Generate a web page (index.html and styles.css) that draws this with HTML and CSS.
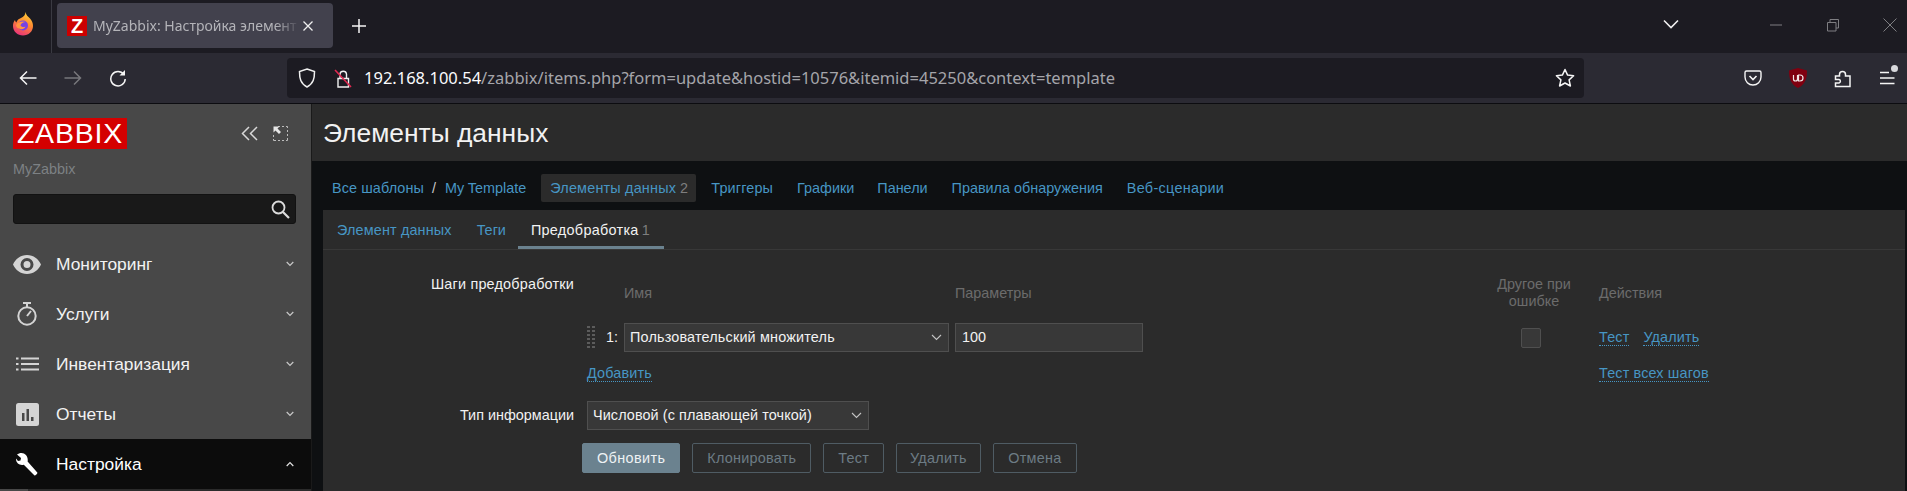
FILE: index.html
```html
<!DOCTYPE html>
<html lang="ru">
<head>
<meta charset="utf-8">
<title>MyZabbix</title>
<link rel="stylesheet" href="styles.css">
</head>
<body>
<div class="tabstrip">
  <div class="ff-slot">
    <svg class="ff" width="24" height="24" viewBox="0 0 24 24"><defs><linearGradient id="ffg" x1="0.7" y1="0" x2="0.3" y2="1"><stop offset="0" stop-color="#ffd43a"/><stop offset="0.45" stop-color="#ff8a30"/><stop offset="1" stop-color="#e8307c"/></linearGradient></defs><path fill="url(#ffg)" d="M14.500 0c.5 3 2.500 4.500 4.500 6.500 2 2.300 3 4.500 3 7.500 0 5.500-4.500 9.500-10 9.500S2 19.500 2 14c0-2.500.7-4.500 2-6 .2 1.300.7 2 1.400 2.600C6 8 8 6.800 10 6c2.500-1 4.500-3 4.500-6z"/><circle cx="12" cy="13.500" r="5" fill="#7542e5"/><path fill="#ff9640" d="M5 13c2-3 6-4.500 10-3-3 0-5 1.500-5.500 3.500 1 1.500 3 2 5 1-1 2.500-4 3.500-6.500 2C6 16 5 14.500 5 13z"/></svg>
  </div>
  <div class="tab">
    <span class="favicon">Z</span>
    <span class="tab-title">MyZabbix: Настройка элемент</span>
    <svg class="tab-close" width="14" height="14" viewBox="0 0 14 14"><path d="M2.500 2.500l9 9M11.500 2.500l-9 9" stroke="#f0f0f0" stroke-width="1.300" fill="none"/></svg>
  </div>
  <svg class="newtab" width="18" height="18" viewBox="0 0 18 18"><path d="M9 2v14M2 9h14" stroke="#f5f5f5" stroke-width="1.500" fill="none"/></svg>
  <svg class="alltabs" width="18" height="12" viewBox="0 0 18 12"><path d="M2 2.500l7 7 7-7" stroke="#f0f0f0" stroke-width="1.600" fill="none"/></svg>
  <div class="winctl">
    <svg width="14" height="14" viewBox="0 0 14 14"><path d="M1 7h12" stroke="#7e7e82" stroke-width="1" fill="none"/></svg>
    <svg width="14" height="14" viewBox="0 0 14 14"><path d="M1.500 4.500h8.500V13H1.500zM4 4.500v-3h8.500V10H10" stroke="#7e7e82" stroke-width="1" fill="none"/></svg>
    <svg width="14" height="14" viewBox="0 0 14 14"><path d="M.5.500l13 13M13.500.500l-13 13" stroke="#7e7e82" stroke-width="1" fill="none"/></svg>
  </div>
</div>
<div class="toolbar">
  <svg class="tb-ic back" width="18" height="16" viewBox="0 0 18 16"><path d="M8 1.500L1.500 8 8 14.500M1.500 8H17.500" stroke="#f5f5f5" stroke-width="1.500" fill="none"/></svg>
  <svg class="tb-ic fwd" width="18" height="16" viewBox="0 0 18 16"><path d="M10 1.500L16.500 8 10 14.500M16.500 8H.5" stroke="#77777c" stroke-width="1.500" fill="none"/></svg>
  <svg class="tb-ic reload" width="18" height="18" viewBox="0 0 18 18"><path d="M14.800 5.500A7.200 7.200 0 1 0 16.200 10" stroke="#f5f5f5" stroke-width="1.500" fill="none"/><path d="M16 1v5.500h-5.500z" fill="#f5f5f5"/></svg>
  <div class="urlbar">
    <svg class="shield" width="18" height="20" viewBox="0 0 18 20"><path d="M9 1l7.500 2.500c0 7-1 12-7.500 15.500C2.500 15.500 1.500 10.500 1.500 3.500z" stroke="#f0f0f0" stroke-width="1.500" fill="none"/></svg>
    <svg class="lock" width="18" height="20" viewBox="0 0 18 20"><path d="M4 10.500h10.500V19H4zM6 10.500V6a3.300 3.300 0 0 1 6.500 0v4.500" stroke="#f0f0f0" stroke-width="1.400" fill="none"/><path d="M1 2l16 17" stroke="#e22850" stroke-width="1.600" fill="none"/></svg>
    <span class="url"><span class="url-host">192.168.100.54</span>/zabbix/items.php?form=update&amp;hostid=10576&amp;itemid=45250&amp;context=template</span>
    <svg class="star" width="20" height="20" viewBox="0 0 20 20"><path d="M10 1.500l2.600 5.600 6 .7-4.500 4.100 1.300 6.100L10 15l-5.400 3 1.300-6.100L1.400 7.800l6-.7z" stroke="#f5f5f5" stroke-width="1.500" stroke-linejoin="round" fill="none"/></svg>
  </div>
  <div class="tb-right">
    <svg width="18" height="16" viewBox="0 0 18 16"><path d="M2.500 1h13A1.500 1.500 0 0 1 17 2.500V7a8 8 0 0 1-16 0V2.500A1.500 1.500 0 0 1 2.500 1z" stroke="#f5f5f5" stroke-width="1.400" fill="none"/><path d="M5.500 6L9 9.500 12.500 6" stroke="#f5f5f5" stroke-width="1.600" fill="none"/></svg>
    <svg class="ub" width="18" height="20" viewBox="0 0 18 20"><path d="M9 0l9 2.500c0 8-1.500 13.500-9 17.500C1.500 16 0 10.500 0 2.500z" fill="#800010"/><path d="M4.500 7v4a2 2 0 0 0 4 0V7M9.500 7h1.500a2.500 2.500 0 0 1 0 6H9.500z" stroke="#f0e6e6" stroke-width="1.200" fill="none"/></svg>
    <svg width="18" height="20" viewBox="0 0 18 20"><path d="M1.500 8h4V6.500a3 3 0 1 1 6 0V8h4.500v10.500H1.500V15H5a1.800 1.800 0 0 0 0-3.500H1.500z" stroke="#f5f5f5" stroke-width="1.500" fill="none"/></svg>
    <span class="menu-ic"><svg width="16" height="14" viewBox="0 0 16 14"><path d="M1 1.500h9M1 7h14.500M1 12.500h14.500" stroke="#f5f5f5" stroke-width="1.400" fill="none"/></svg><i class="dot"></i></span>
  </div>
</div>
<div class="app">
  <aside class="sidebar">
    <div class="brand">
      <span class="logo">ZABBIX</span>
      <div class="brand-ctl">
        <svg width="18" height="15" viewBox="0 0 18 15"><path d="M8 1L1.500 7.500 8 14M16 1L9.500 7.500 16 14" stroke="#d8d8d8" stroke-width="1.500" fill="none"/></svg>
        <svg width="15" height="15" viewBox="0 0 15 15"><path d="M5 .5h2M9 .5h2M13 .5h1.500V2M14.500 4v2M14.500 8v2M14.500 12v2.500H13M11 14.500H9M7 14.500H5M3 14.500H.5V13M.5 11V9" stroke="#bdbdbd" stroke-width="1" fill="none"/><path d="M.5.500h6l-2 2 3.500 3.500-2 2L2.500 4.500l-2 2z" fill="#e6e6e6"/></svg>
      </div>
    </div>
    <div class="server">MyZabbix</div>
    <div class="search">
      <svg width="19" height="19" viewBox="0 0 19 19"><circle cx="7.500" cy="7.500" r="6" stroke="#dcdcdc" stroke-width="1.800" fill="none"/><path d="M12 12l6 6" stroke="#dcdcdc" stroke-width="2.200" fill="none"/></svg>
    </div>
    <nav class="menu">
      <div class="mi">
        <span class="mi-ic"><svg width="28" height="19" viewBox="0 0 28 19"><path fill-rule="evenodd" fill="#d4d4d4" d="M14 0c6.500 0 11.500 4 14 9.500C25.500 15 20.500 19 14 19S2.500 15 0 9.500C2.500 4 7.500 0 14 0zm0 3a6.500 6.500 0 1 0 0 13 6.500 6.500 0 0 0 0-13zm0 3a3.500 3.500 0 1 1 0 7 3.500 3.500 0 0 1 0-7z"/></svg></span>
        <span class="mi-text">Мониторинг</span>
        <svg class="chev" width="8" height="6" viewBox="0 0 8 6"><path d="M.7 1L4 4.500 7.300 1" stroke="#c8c8c8" stroke-width="1.200" fill="none"/></svg>
      </div>
      <div class="mi">
        <span class="mi-ic"><svg width="20" height="24" viewBox="0 0 20 24"><circle cx="10" cy="14" r="8.700" stroke="#d4d4d4" stroke-width="2" fill="none"/><path d="M6 1h8" stroke="#d4d4d4" stroke-width="2" fill="none"/><path d="M10 1v4M10 14l4-5" stroke="#d4d4d4" stroke-width="2" fill="none"/></svg></span>
        <span class="mi-text">Услуги</span>
        <svg class="chev" width="8" height="6" viewBox="0 0 8 6"><path d="M.7 1L4 4.500 7.300 1" stroke="#c8c8c8" stroke-width="1.200" fill="none"/></svg>
      </div>
      <div class="mi">
        <span class="mi-ic"><svg width="23" height="14" viewBox="0 0 23 14"><path d="M0 1.500h2.500M0 7h2.500M0 12.500h2.500M5 1.500h18M5 7h18M5 12.500h18" stroke="#d4d4d4" stroke-width="2.200" fill="none"/></svg></span>
        <span class="mi-text">Инвентаризация</span>
        <svg class="chev" width="8" height="6" viewBox="0 0 8 6"><path d="M.7 1L4 4.500 7.300 1" stroke="#c8c8c8" stroke-width="1.200" fill="none"/></svg>
      </div>
      <div class="mi">
        <span class="mi-ic"><svg width="23" height="23" viewBox="0 0 23 23"><rect width="23" height="23" rx="2.500" fill="#d4d4d4"/><path d="M6 10h2.500v8H6zM10.500 6H13v12h-2.500zM15 14h2.500v4H15z" fill="#484848"/></svg></span>
        <span class="mi-text">Отчеты</span>
        <svg class="chev" width="8" height="6" viewBox="0 0 8 6"><path d="M.7 1L4 4.500 7.300 1" stroke="#c8c8c8" stroke-width="1.200" fill="none"/></svg>
      </div>
      <div class="mi mi-active">
        <span class="mi-ic"><svg width="23" height="23" viewBox="0 0 23 23"><path fill="#fff" d="M5.500 0C3.800 0 2.200.6 1 1.500L5 5 4.500 7.500 2 8 0 5.500C-.3 9 2.500 12 6 12c.6 0 1.200-.1 1.800-.3L18.500 22.500c.6.600 3.500-2 2.800-3.100L11.600 8.500C12.500 4 9.500 0 5.500 0z"/></svg></span>
        <span class="mi-text">Настройка</span>
        <svg class="chev" width="8" height="6" viewBox="0 0 8 6"><path d="M.7 5L4 1.500 7.300 5" stroke="#e0e0e0" stroke-width="1.200" fill="none"/></svg>
      </div>
      <div class="submenu"></div>
    </nav>
  </aside>
  <main class="main">
    <header class="page-head"><h1 class="page-title">Элементы данных</h1></header>
    <nav class="crumbs">
      <a class="lnk crumb crumb-all">Все шаблоны</a><span class="sep">/</span><a class="lnk crumb">My Template</a>
      <span class="crumb-sel"><a class="lnk">Элементы данных</a> <span class="count">2</span></span>
      <a class="lnk crumb-tr">Триггеры</a>
      <a class="lnk crumb-gr">Графики</a>
      <a class="lnk crumb-pa">Панели</a>
      <a class="lnk crumb-ru">Правила обнаружения</a>
      <a class="lnk crumb-we">Веб-сценарии</a>
    </nav>
    <section class="card">
      <div class="tabs">
        <a class="lnk tab-a">Элемент данных</a>
        <a class="lnk tab-b">Теги</a>
        <span class="tab-sel">Предобработка <span class="count">1</span></span>
      </div>
      <div class="form">
        <div class="field">
          <div class="label label-steps">Шаги предобработки</div>
          <div class="steps">
            <div class="sh steps-head-spacer"></div>
            <div class="sh sh-mid">Имя</div>
            <div class="sh sh-mid">Параметры</div>
            <div class="sh sh-other">Другое при ошибке</div>
            <div class="sh sh-mid">Действия</div>

            <div class="step-num">
              <svg width="8" height="24" viewBox="0 0 8 24"><path d="M1.500 0v24M6.500 0v24" stroke="#5c5c5c" stroke-width="3" stroke-dasharray="2 2" fill="none"/></svg>
              <span>1:</span>
            </div>
            <div class="select sel-step"><span>Пользовательский множитель</span><svg width="11" height="7" viewBox="0 0 11 7"><path d="M1 1l4.500 4.500L10 1" stroke="#c4c4c4" stroke-width="1.100" fill="none"/></svg></div>
            <div class="input">100</div>
            <div class="chk-cell"><span class="chk"></span></div>
            <div class="act"><a class="dlnk">Тест</a><a class="dlnk">Удалить</a></div>

            <div class="add-cell"><a class="dlnk">Добавить</a></div>
            <div class="act-all"><a class="dlnk">Тест всех шагов</a></div>
          </div>
        </div>
        <div class="field field-type">
          <div class="label">Тип информации</div>
          <div class="select sel-type"><span>Числовой (с плавающей точкой)</span><svg width="11" height="7" viewBox="0 0 11 7"><path d="M1 1l4.500 4.500L10 1" stroke="#c4c4c4" stroke-width="1.100" fill="none"/></svg></div>
        </div>
        <div class="buttons">
          <button class="btn btn-primary">Обновить</button>
          <button class="btn">Клонировать</button>
          <button class="btn">Тест</button>
          <button class="btn btn-del">Удалить</button>
          <button class="btn">Отмена</button>
        </div>
      </div>
    </section>
  </main>
</div>
</body>
</html>
```
FILE: styles.css
```css
* { box-sizing: border-box; }
html, body { margin: 0; height: 491px; overflow: hidden; background: #0e1012; }
body { font: 14.4px/17px "Liberation Sans", Arial, sans-serif; color: #f2f2f2; }
svg { display: block; flex: none; }

/* browser chrome */
.tabstrip { height: 53px; background: #1c1b22; display: flex; align-items: flex-start; }
.ff-slot { width: 52px; height: 53px; border-right: 1px solid #3a3a42; display: flex; align-items: center; padding: 0 0 6px 11px; }
.tab { margin: 3px 0 0 5px; width: 276px; height: 45px; background: #42414d; border-radius: 4px; display: flex; align-items: center; padding-left: 10px; }
.favicon { width: 20px; height: 20px; background: #cc0000; color: #fff; font: bold 20px/20px "Liberation Sans", sans-serif; text-align: center; flex: none; }
.tab-title { margin-left: 6px; width: 207px; white-space: nowrap; font: 14px/20px "Noto Sans", "Open Sans", sans-serif; color: #b4b4b9; -webkit-mask-image: linear-gradient(90deg, #000 88%, transparent 100%); mask-image: linear-gradient(90deg, #000 88%, transparent 100%); }
.tab-close { margin-left: 1px; }
.newtab { margin: 17px 0 0 17px; }
.alltabs { margin: 18px 0 0 1294px; }
.winctl { margin: 18px 0 0 89px; display: flex; gap: 43px; }

.toolbar { height: 50px; background: #2b2a33; display: flex; align-items: center; border-bottom: 0; }
.tb-ic.back { margin-left: 19px; }
.tb-ic.fwd { margin-left: 27px; }
.tb-ic.reload { margin-left: 27px; }
.urlbar { margin-left: 160px; width: 1297px; height: 40px; background: #1c1b22; border-radius: 4px; display: flex; align-items: center; padding: 0 9px 0 11px; }
.lock { margin-left: 18px; }
.url { margin-left: 12px; font: 16.500px/20px "Noto Sans", "Open Sans", sans-serif; color: #a5a5aa; white-space: nowrap; flex: 1; }
.url-host { color: #fbfbfe; }
.tb-right { margin-left: 160px; display: flex; align-items: center; gap: 27px; }
.menu-ic { position: relative; display: block; }
.dot { position: absolute; top: -6px; right: -3px; width: 7px; height: 7px; border-radius: 50%; background: #d8d8dc; }

/* app */
.app { display: flex; height: 388px; border-top: 1px solid #0c0c10; }
.sidebar { width: 311px; background: #484848; flex: none; overflow: hidden; }
.brand { display: flex; align-items: center; justify-content: space-between; padding: 14px 23px 0 13px; }
.logo { display: block; width: 114px; height: 31px; background: #d40000; color: #fff; font: 28.500px/31px "Liberation Sans", sans-serif; letter-spacing: .8px; text-align: center; }
.brand-ctl { display: flex; align-items: center; gap: 14px; }
.server { margin: 12px 0 0 13px; color: #7d8184; }
.search { margin: 16px 15px 0 13px; height: 30px; background: #191919; border: 1px solid #121212; border-radius: 3px; display: flex; align-items: center; justify-content: flex-end; padding-right: 5px; }
.menu { margin-top: 15px; }
.mi { height: 50px; display: flex; align-items: center; padding-left: 13px; font-size: 17.400px; color: #f2f2f2; }
.mi-ic { width: 43px; display: flex; justify-content: center; padding-right: 15px; flex: none; }
.mi-text { flex: 1; }
.chev { margin-right: 17px; }
.mi-active { background: #0c0c0c; color: #fff; }
.submenu { height: 10px; margin-left: 28px; background: #2b2b2b; }

.main { flex: 1; min-width: 0; background: #0e1012; border-left: 1px solid #1a1a1a; }
.page-head { height: 57px; background: #2b2b2b; display: flex; align-items: center; padding-left: 11px; }
.page-title { margin: 0; font-size: 26.400px; line-height: 30px; font-weight: 400; color: #f2f2f2; }
.lnk { color: #4796c4; }
.crumbs { height: 49px; padding: 13px 0 8px 20px; display: flex; align-items: center; white-space: nowrap; }
.crumb-all { letter-spacing: .1px; }
.sep { margin: 0 9px 0 8px; color: #c8c8c8; }
.crumb-sel { margin-left: 15px; height: 28px; padding: 0 8px 0 9px; background: #2b2b2b; border-radius: 2px; display: flex; align-items: center; gap: 4px; letter-spacing: .2px; }
.count { color: #7e7e7e; }
.crumb-tr { margin-left: 15px; letter-spacing: .15px; }
.crumb-gr { margin-left: 24px; }
.crumb-pa { margin-left: 23px; }
.crumb-ru { margin-left: 24px; }
.crumb-we { margin-left: 24px; letter-spacing: .3px; }

.card { margin: 0 2px 0 11px; background: #2b2b2b; height: 281px; }
.tabs { height: 40px; border-bottom: 1px solid #383838; display: flex; align-items: center; padding-left: 14px; white-space: nowrap; }
.tab-a { letter-spacing: .15px; padding-top: 2px; }
.tab-b { margin-left: 25px; padding-top: 2px; }
.tab-sel { margin-left: 12px; height: 39px; padding: 5px 14px 0 13px; display: flex; align-items: center; gap: 3px; border-bottom: 3px solid #6b828f; color: #f2f2f2; letter-spacing: .3px; }

.form { padding-top: 26px; }
.field { display: flex; }
.label { width: 251px; text-align: right; flex: none; }
.label-steps { letter-spacing: .2px; }
.steps { margin-left: 13px; display: grid; grid-template-columns: 37px 331px 542px 102px 1fr; grid-template-rows: 34px 29px 17px; row-gap: 13px; flex: 1; }
.sh { color: #6c6c6c; }
.sh-mid { align-self: center; }
.sh-other { width: 74px; text-align: center; }
.step-num { display: flex; align-items: center; gap: 11px; }
.select { background: #383838; border: 1px solid #4f4f4f; height: 29px; display: flex; align-items: center; justify-content: space-between; padding: 0 6px 0 5px; color: #f2f2f2; }
.sel-step { width: 325px; letter-spacing: .18px; }
.input { width: 188px; height: 29px; background: #383838; border: 1px solid #4f4f4f; display: flex; align-items: center; padding-left: 6px; }
.chk-cell { display: flex; align-items: center; padding-left: 24px; }
.chk { width: 20px; height: 20px; background: #383838; border: 1px solid #4f4f4f; border-radius: 2px; }
.act { display: flex; align-items: center; gap: 14px; }
.dlnk { color: #4796c4; border-bottom: 1px dotted #4796c4; line-height: 16px; display: inline-block; letter-spacing: .15px; }
.add-cell { grid-column: 1 / 5; }
.act-all { grid-column: 5; }
.field-type { margin-top: 19px; align-items: center; }
.sel-type { margin-left: 13px; width: 282px; letter-spacing: .1px; }
.buttons { display: flex; gap: 12px; margin-top: 13px; padding-left: 259px; }
.btn { height: 30px; padding: 0 14px; background: transparent; border: 1px solid #4f5c64; border-radius: 2px; font: inherit; color: #6d7c85; letter-spacing: .25px; }
.btn-primary { background: #6b828f; border-color: #6b828f; color: #eef2f4; padding: 0 14px; letter-spacing: .4px; }
.btn-del { padding: 0 13px; }
.btn-del + .btn { padding: 0 14.500px; }
```
